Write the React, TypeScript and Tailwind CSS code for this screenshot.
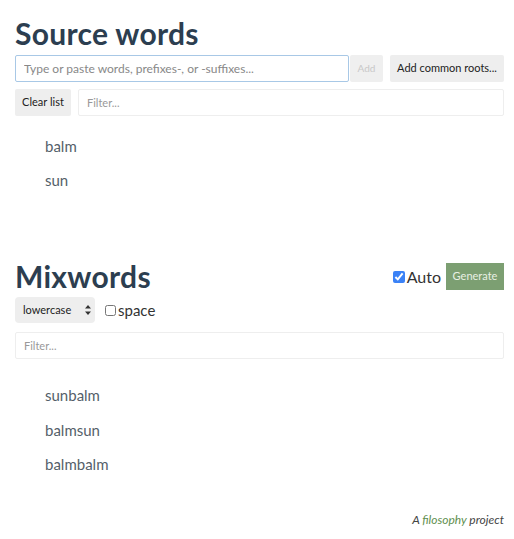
import { useState } from "react";

const sourceWords = ["balm", "sun"];
const mixwords = ["sunbalm", "balmsun", "balmbalm"];

export default function App() {
  const [auto, setAuto] = useState(true);
  const [space, setSpace] = useState(false);

  return (
    <div className="bg-white pl-[15px] pr-[10px] text-[#2c3e50] [font-family:Lato,'Open_Sans',sans-serif]">
      <h1 className="pt-[14px] text-[30px] font-bold leading-[38px] tracking-[0.3px]">Source words</h1>

      <div className="mt-[3px] flex h-[27px] gap-[1px]">
        <input
          className="h-full flex-1 rounded-[2px] border border-[#a8c8e6] px-[8px] text-[12px] text-[#333] outline-none placeholder:text-[#888]"
          placeholder="Type or paste words, prefixes-, or -suffixes..."
        />
        <button className="h-full w-[33px] rounded-[2px] bg-[#efefef] text-[10px] text-[#c8c8c8]">Add</button>
        <button className="ml-[6px] h-full w-[114px] rounded-[2px] bg-[#eeeeee] text-[11px] text-[#222]">
          Add common roots...
        </button>
      </div>

      <div className="mt-[7px] flex h-[27px] gap-[7px]">
        <button className="h-full w-[56px] rounded-[2px] bg-[#eeeeee] text-[11px] text-[#222]">Clear list</button>
        <input
          className="h-full flex-1 rounded-[2px] border border-[#eeeeee] px-[8px] text-[11px] outline-none placeholder:text-[#999]"
          placeholder="Filter..."
        />
      </div>

      <ul className="mt-[19px] pl-[30px] text-[15px] text-[#555f6a]">
        {sourceWords.map((w) => (
          <li key={w} className="h-[34px] leading-[22px]">
            {w}
          </li>
        ))}
      </ul>

      <div className="mt-[59px] flex h-[29px] items-center justify-between">
        <h2 className="text-[30px] font-bold leading-[29px] tracking-[0.3px]">Mixwords</h2>
        <div className="flex items-center">
          <label className="flex items-center text-[16px] text-[#333]">
            <input
              type="checkbox"
              checked={auto}
              onChange={(e) => setAuto(e.target.checked)}
              className="mr-[2px] h-[12px] w-[12px] accent-[#3b82f6]"
            />
            Auto
          </label>
          <button className="ml-[5px] h-[27px] w-[58px] bg-[#7c9f72] text-[11px] text-[#e8f0e4]">Generate</button>
        </div>
      </div>

      <div className="mt-[6px] flex h-[26px] items-center">
        <div className="relative flex h-full w-[80px] items-center rounded-[4px] bg-[#eeeeee] pl-[8px] text-[11px] text-[#222]">
          lowercase
          <span className="absolute right-[4px] top-[7px] flex flex-col leading-none">
            <svg width="6" height="12" viewBox="0 0 6 12">
              <path d="M0 4.5 L3 1 L6 4.5Z M0 7.5 L3 11 L6 7.5Z" fill="#333" />
            </svg>
          </span>
        </div>
        <label className="ml-[10px] flex items-center text-[15px] text-[#333]">
          <input
            type="checkbox"
            checked={space}
            onChange={(e) => setSpace(e.target.checked)}
            className="mr-[2px] h-[11px] w-[11px]"
          />
          space
        </label>
      </div>

      <input
        className="mt-[9px] block h-[27px] w-full rounded-[2px] border border-[#eeeeee] px-[8px] text-[11px] outline-none placeholder:text-[#999]"
        placeholder="Filter..."
      />

      <ul className="mt-[25px] pl-[30px] text-[15px] text-[#555f6a]">
        {mixwords.map((w) => (
          <li key={w} className="h-[34.5px] leading-[22px]">
            {w}
          </li>
        ))}
      </ul>

      <p className="mt-[24px] text-right text-[12px] leading-[16px] italic text-[#444]">
        A <span className="text-[#5f8f4f]">filosophy</span> project
      </p>
    </div>
  );
}
